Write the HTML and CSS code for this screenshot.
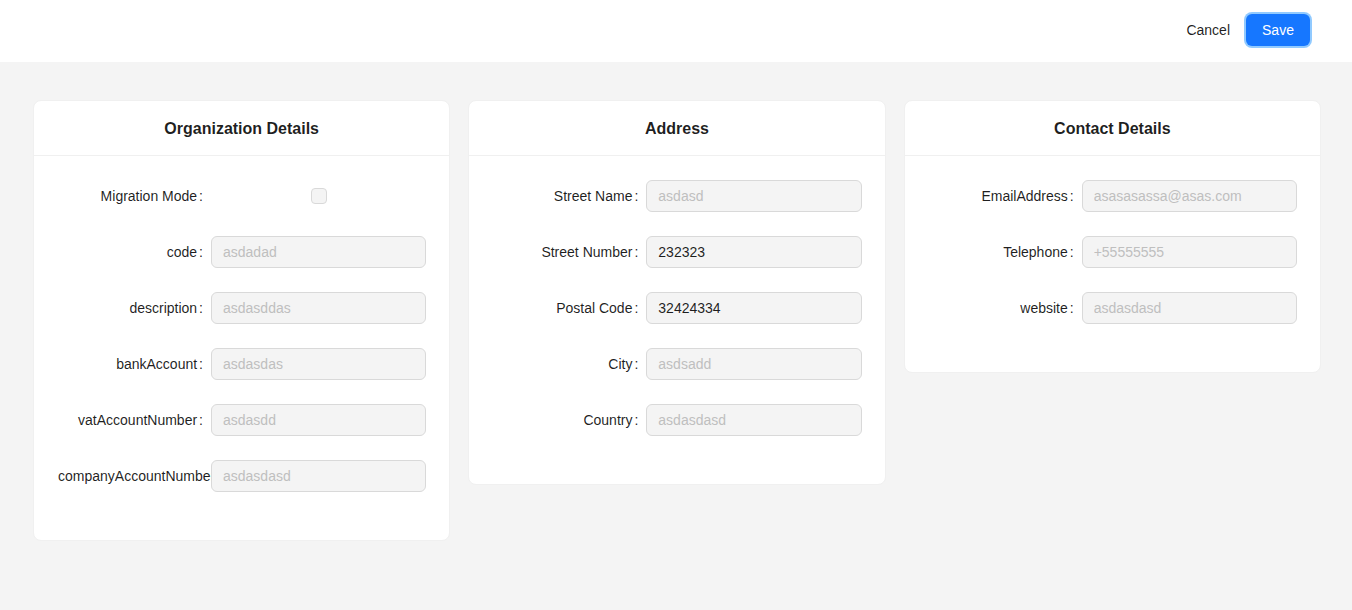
FILE: index.html
```html
<!DOCTYPE html>
<html lang="en">
<head>
<meta charset="utf-8">
<title>Organization</title>
<link rel="stylesheet" href="styles.css">
</head>
<body>
<header class="topbar">
  <div class="actions">
    <button class="btn btn-text" type="button">Cancel</button>
    <button class="btn btn-primary" type="button">Save</button>
  </div>
</header>
<main class="cards">
  <section class="card">
    <div class="card-head">Organization Details</div>
    <div class="card-body">
      <div class="row"><div class="label"><label>Migration Mode</label></div><div class="control center"><span class="checkbox"></span></div></div>
      <div class="row"><div class="label"><label>code</label></div><div class="control"><input class="input" placeholder="asdadad" disabled></div></div>
      <div class="row"><div class="label"><label>description</label></div><div class="control"><input class="input" placeholder="asdasddas" disabled></div></div>
      <div class="row"><div class="label"><label>bankAccount</label></div><div class="control"><input class="input" placeholder="asdasdas" disabled></div></div>
      <div class="row"><div class="label"><label>vatAccountNumber</label></div><div class="control"><input class="input" placeholder="asdasdd" disabled></div></div>
      <div class="row"><div class="label"><label>companyAccountNumber</label></div><div class="control"><input class="input" placeholder="asdasdasd" disabled></div></div>
    </div>
  </section>
  <section class="card">
    <div class="card-head">Address</div>
    <div class="card-body">
      <div class="row"><div class="label"><label>Street Name</label></div><div class="control"><input class="input" placeholder="asdasd" disabled></div></div>
      <div class="row"><div class="label"><label>Street Number</label></div><div class="control"><input class="input" value="232323"></div></div>
      <div class="row"><div class="label"><label>Postal Code</label></div><div class="control"><input class="input" value="32424334"></div></div>
      <div class="row"><div class="label"><label>City</label></div><div class="control"><input class="input" placeholder="asdsadd" disabled></div></div>
      <div class="row"><div class="label"><label>Country</label></div><div class="control"><input class="input" placeholder="asdasdasd" disabled></div></div>
    </div>
  </section>
  <section class="card">
    <div class="card-head">Contact Details</div>
    <div class="card-body">
      <div class="row"><div class="label"><label>EmailAddress</label></div><div class="control"><input class="input" placeholder="asasasassa@asas.com" disabled></div></div>
      <div class="row"><div class="label"><label>Telephone</label></div><div class="control"><input class="input" placeholder="+55555555" disabled></div></div>
      <div class="row"><div class="label"><label>website</label></div><div class="control"><input class="input" placeholder="asdasdasd" disabled></div></div>
    </div>
  </section>
</main>
</body>
</html>
```
FILE: styles.css
```css
* { box-sizing: border-box; }
html, body { margin: 0; padding: 0; }
body {
  background: #f4f4f4;
  font-family: "Liberation Sans", Arial, sans-serif;
  font-size: 14px;
  color: rgba(0, 0, 0, 0.88);
  height: 610px;
  overflow: hidden;
}
.topbar {
  height: 62px;
  background: #ffffff;
  display: flex;
  justify-content: flex-end;
  align-items: flex-start;
  padding: 14px 42px 0 0;
}
.actions { display: flex; align-items: center; gap: 0; }
.btn {
  font-family: inherit;
  font-size: 14px;
  height: 32px;
  padding: 0 15px;
  border-radius: 6px;
  border: 1px solid transparent;
  cursor: pointer;
  line-height: 30px;
}
.btn-text { background: transparent; color: rgba(0, 0, 0, 0.88); }
.btn-primary {
  background: #1677ff;
  color: #ffffff;
  width: 64px;
  box-shadow: 0 0 0 2px #91caff;
}
.cards {
  display: grid;
  grid-template-columns: repeat(3, 1fr);
  gap: 18px;
  padding: 38px 31px 0 33px;
  align-items: start;
}
.card {
  background: #ffffff;
  border: 1px solid #f0f0f0;
  border-radius: 8px;
}
.card-head {
  height: 55px;
  line-height: 55px;
  text-align: center;
  font-size: 16px;
  font-weight: bold;
  border-bottom: 1px solid #f0f0f0;
  color: rgba(0, 0, 0, 0.88);
}
.card-body { padding: 24px 23px 0 23px; }
.row {
  display: flex;
  height: 32px;
  margin-bottom: 24px;
}
.card-body .row:last-child { margin-bottom: 48px; }
.label {
  width: 153px;
  margin-left: 1px;
  flex: none;
  text-align: right;
  white-space: nowrap;
  overflow: hidden;
  line-height: 32px;
}
.label label::after {
  content: ":";
  margin: 0 8px 0 2px;
}
.control { flex: 1; display: flex; align-items: center; }
.control.center { justify-content: center; }
.input {
  width: 100%;
  height: 32px;
  padding: 4px 11px;
  font-family: inherit;
  font-size: 14px;
  color: rgba(0, 0, 0, 0.88);
  background: #f4f4f4;
  border: 1px solid #d9d9d9;
  border-radius: 6px;
  outline: none;
}
.input::placeholder { color: #bfbfbf; }
.checkbox {
  display: block;
  width: 16px;
  height: 16px;
  border: 1px solid #d9d9d9;
  border-radius: 4px;
  background: #f4f4f4;
}
```
